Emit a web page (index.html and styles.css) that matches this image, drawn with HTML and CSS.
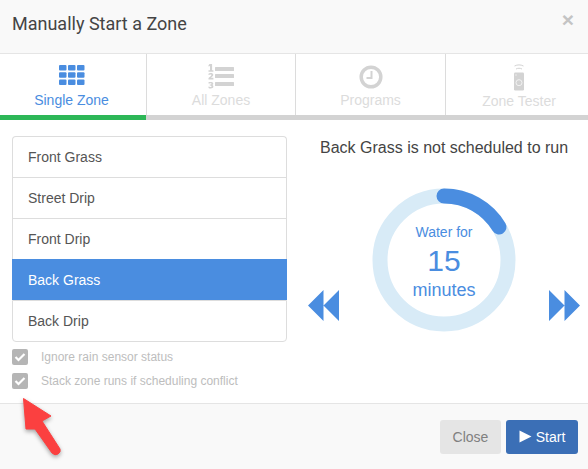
FILE: index.html
```html
<!DOCTYPE html>
<html lang="en">
<head>
<meta charset="utf-8">
<title>Manually Start a Zone</title>
<link rel="stylesheet" href="styles.css">
</head>
<body>
<div class="modal">
  <header class="head">
    <h1 class="title">Manually Start a Zone</h1>
    <span class="close-x">×</span>
  </header>
  <nav class="tabs">
    <div class="tab active">
      <svg class="tab-icon icon-grid" width="28" height="22" viewBox="0 0 28 22"><g fill="#4a8de0"><rect x="1" y="1" width="7.5" height="5.5" rx="1"/><rect x="10" y="1" width="7.5" height="5.5" rx="1"/><rect x="19" y="1" width="7.5" height="5.5" rx="1"/><rect x="1" y="8.2" width="7.5" height="5.5" rx="1"/><rect x="10" y="8.2" width="7.5" height="5.5" rx="1"/><rect x="19" y="8.2" width="7.5" height="5.5" rx="1"/><rect x="1" y="15.5" width="7.5" height="5.5" rx="1"/><rect x="10" y="15.5" width="7.5" height="5.5" rx="1"/><rect x="19" y="15.5" width="7.5" height="5.5" rx="1"/></g></svg>
      <span class="tab-label">Single Zone</span>
    </div>
    <div class="tab">
      <svg class="tab-icon icon-list" width="27" height="26" viewBox="0 0 27 26"><g fill="#d3d3d3"><rect x="7" y="3" width="19" height="4" rx=".5"/><rect x="7" y="10" width="19" height="4" rx=".5"/><rect x="7" y="18" width="19" height="4" rx=".5"/><path d="M1.500 0h2.600v6.200h1.300v1.500H.5V6.200h1.500V2L.5 2.500V1.200Z"/><path d="M.5 9.700c1-1 4.800-1.200 4.800 1.100 0 1.400-1.700 2.200-2.500 3h2.600v1.700H.5v-1.400c1-1 2.900-2.200 2.900-3 0-.9-1.700-.5-2.900 0Z"/><path d="M.5 18.300c1.500-.6 4.800-.6 4.800 1.300 0 .8-.4 1.100-.9 1.400.6.200 1 .8 1 1.500 0 2.200-3.500 2.300-4.900 1.400v-1.300c1 .5 3 .8 3-.2 0-.7-.8-.8-1.800-.8v-1.100c.9 0 1.700-.1 1.700-.8 0-.9-1.900-.5-2.900-.1Z"/></g></svg>
      <span class="tab-label">All Zones</span>
    </div>
    <div class="tab">
      <svg class="tab-icon icon-clock" width="24" height="24" viewBox="0 0 24 24"><circle cx="12" cy="12" r="9.800" fill="none" stroke="#d3d3d3" stroke-width="3.500"/><path d="M12.500 6v7H7.500" fill="none" stroke="#d3d3d3" stroke-width="2"/></svg>
      <span class="tab-label">Programs</span>
    </div>
    <div class="tab">
      <svg class="tab-icon icon-remote" width="14" height="28" viewBox="0 0 14 28"><path d="M2.500 3c3-1.500 6-1.500 9 0M4 6c2-1 4-1 6 0" fill="none" stroke="#d3d3d3" stroke-width="1"/><rect x="2" y="9.500" width="10" height="18" rx="1.200" fill="#d3d3d3"/><circle cx="7" cy="19.700" r="3" fill="none" stroke="#f2f2f2" stroke-width="1"/><circle cx="4" cy="12" r=".7" fill="#f2f2f2"/></svg>
      <span class="tab-label">Zone Tester</span>
    </div>
  </nav>
  <div class="tab-rail"><div class="tab-rail-on"></div></div>
  <main class="body">
    <section class="left">
      <ul class="zones">
        <li class="zone">Front Grass</li>
        <li class="zone">Street Drip</li>
        <li class="zone">Front Drip</li>
        <li class="zone selected">Back Grass</li>
        <li class="zone">Back Drip</li>
      </ul>
      <label class="check"><span class="box"><svg width="12" height="10" viewBox="0 0 12 10"><path d="M1.500 5l3 3 6-6" fill="none" stroke="#fff" stroke-width="2.200"/></svg></span>Ignore rain sensor status</label>
      <label class="check"><span class="box"><svg width="12" height="10" viewBox="0 0 12 10"><path d="M1.500 5l3 3 6-6" fill="none" stroke="#fff" stroke-width="2.200"/></svg></span>Stack zone runs if scheduling conflict</label>
    </section>
    <section class="right">
      <p class="status">Back Grass is not scheduled to run</p>
      <div class="timer">
        <svg class="arrows" width="32" height="32" viewBox="0 0 32 32"><path d="M15.500 0v31L0 15.500ZM31 0v31L15.500 15.500Z" fill="#4a8de0"/></svg>
        <div class="dial">
          <svg width="144" height="144" viewBox="0 0 144 144"><circle cx="72" cy="72" r="64" fill="none" stroke="#d8ebf7" stroke-width="15"/><path d="M72 8A64 64 0 0 1 127 39" fill="none" stroke="#4a8de0" stroke-width="15" stroke-linecap="round"/></svg>
          <div class="dial-text">
            <span class="dial-small">Water for</span>
            <span class="dial-num">15</span>
            <span class="dial-unit">minutes</span>
          </div>
        </div>
        <svg class="arrows" width="32" height="32" viewBox="0 0 32 32"><path d="M1 0v31l15.500-15.500ZM16.500 0v31L32 15.500Z" fill="#4a8de0"/></svg>
      </div>
    </section>
  </main>
  <footer class="foot">
    <button class="btn btn-close">Close</button>
    <button class="btn btn-start"><svg width="13" height="13" viewBox="0 0 13 13"><path d="M.5 .5v12l12-6Z" fill="#fff"/></svg>Start</button>
  </footer>
  <svg class="callout" width="44" height="66" viewBox="0 0 44 66"><path d="M1.500 1.500 L29 19 L20 24 L38 52 Q39 55 36 57 Q33 59 30 56 L13 32 L4 32 Z" fill="#fb4040" stroke="#fb4040" stroke-width="1" stroke-linejoin="round"/></svg>
</div>
</body>
</html>
```
FILE: styles.css
```css
* { box-sizing: border-box; }
html, body { margin: 0; padding: 0; background: #fff; }
body { font-family: "Liberation Sans", Arial, sans-serif; }
.modal { position: relative; width: 588px; height: 469px; display: flex; flex-direction: column; overflow: hidden; }
.head { height: 54px; flex: none; background: #f9f9f9; border-bottom: 1px solid #e5e5e5; display: flex; align-items: center; justify-content: space-between; padding: 0 14px 6px 12px; }
.title { margin: 0; font: 400 18px/24px Roboto, sans-serif; color: #444; }
.close-x { font: 700 21px/1 "Liberation Sans", sans-serif; color: #c4c4c4; margin-top: -9px; }
.tabs { height: 61px; flex: none; display: flex; }
.tab { width: 150px; border-left: 1px solid #dcdcdc; display: flex; flex-direction: column; align-items: center; justify-content: flex-end; padding-bottom: 7px; }
.tab:first-child { width: 146px; border-left: 0; padding-right: 3px; }
.tab:nth-child(2) { width: 149px; }
.tab:last-child { width: 143px; padding-left: 4px; padding-bottom: 6px; }
.tab-icon { display: block; }
.icon-grid { margin-bottom: 6px; }
.icon-list { margin-bottom: 2px; }
.icon-clock { margin-bottom: 3px; }
.icon-remote { margin-bottom: 2px; }
.tab-label { font-size: 14px; line-height: 16px; color: #dcdcdc; }
.tab.active .tab-label { color: #4a8de0; }
.tab-rail { height: 5px; flex: none; background: #d3d3d3; }
.tab-rail-on { width: 146px; height: 5px; background: #2db757; }
.body { flex: 1; display: flex; padding: 16px 8px 0 12px; min-height: 0; }
.left { width: 275px; flex: none; }
.zones { list-style: none; margin: 0 0 3px; padding: 0; }
.zone { height: 41px; border: 1px solid #ddd; border-bottom: 0; padding-left: 15px; font-size: 14px; line-height: 40px; color: #555; }
.zone:first-child { border-radius: 4px 4px 0 0; }
.zone:last-child { height: 42px; border-bottom: 1px solid #ddd; border-radius: 0 0 4px 4px; }
.zone.selected { background: #4a8de0; color: #fff; border-color: #4a8de0; }
.check { display: flex; align-items: center; height: 24px; font-size: 12px; color: #bdbdbd; }
.box { width: 16px; height: 16px; border-radius: 2px; background: #b5b5b5; display: flex; align-items: center; justify-content: center; margin-right: 13px; }
.right { flex: 1; margin-left: 21px; display: flex; flex-direction: column; }
.status { margin: 0; font-size: 16px; line-height: 20px; color: #444; padding: 2px 0 0 12px; height: 22px; white-space: nowrap; }
.timer { display: flex; justify-content: space-between; align-items: flex-end; margin-top: 30px; }
.arrows { display: block; margin-bottom: 10px; }
.dial { position: relative; width: 144px; height: 144px; }
.dial svg { display: block; }
.dial-text { position: absolute; inset: 0; display: flex; flex-direction: column; align-items: center; color: #4a8de0; padding-top: 35px; }
.dial-small { font-size: 14px; line-height: 18px; }
.dial-num { font-size: 30px; line-height: 38px; margin-top: 1px; }
.dial-unit { font-size: 18px; line-height: 20px; }
.foot { height: 66px; flex: none; background: #f9f9f9; border-top: 1px solid #e5e5e5; display: flex; justify-content: flex-end; align-items: center; gap: 5px; padding: 0 10px 0 0; }
.btn { height: 34px; border: 0; border-radius: 3px; font: 14px "Liberation Sans", sans-serif; padding: 0; }
.btn-close { width: 61px; background: #e5e5e5; color: #808080; }
.btn-start { width: 72px; background: #3b6fb6; color: #fff; display: flex; align-items: center; justify-content: center; gap: 4px; }
.callout { position: absolute; left: 22px; top: 397px; filter: drop-shadow(0 2px 2px rgba(0,0,0,.35)); }
```
